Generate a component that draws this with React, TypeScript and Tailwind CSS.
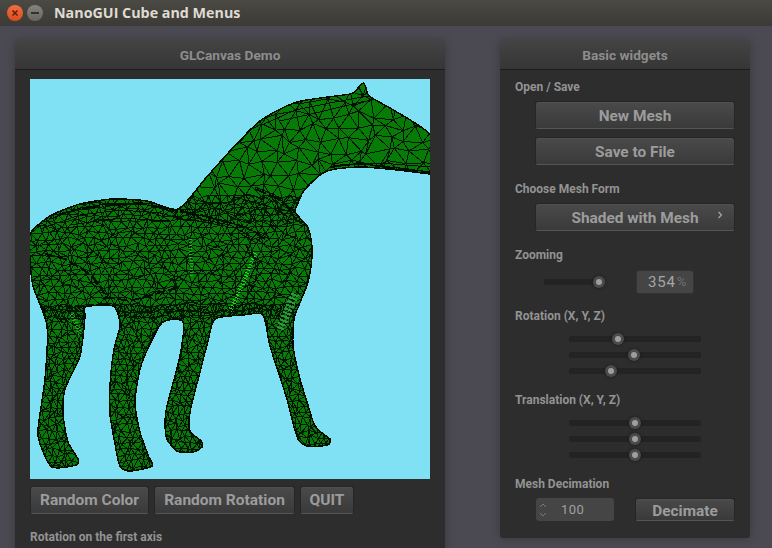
import React from 'react';

const OUTLINE: [number, number][] = [
  [333, 4], [336, 9], [339, 17], [360, 29], [385, 44], [400, 55], [412, 70], [412, 96], [400, 95], [367, 91], [333, 88], [305, 90], [293, 94], [282, 103], [273, 113], [268, 124], [265, 133], [277, 147], [281, 160], [282, 178], [278, 203], [269, 226], [264, 240], [263, 267], [270, 300], [277, 323], [284, 345], [292, 354], [300, 360], [299, 365], [292, 367], [277, 367], [268, 360], [262, 340], [257, 320], [240, 267], [233, 236], [213, 236], [185, 240], [178, 262], [170, 293], [160, 333], [160, 352], [171, 362], [172, 368], [163, 373], [147, 372], [137, 360], [135, 343], [137, 327], [150, 277], [153, 243], [133, 243], [120, 265], [110, 290], [105, 323], [110, 353], [118, 376], [122, 387], [100, 392], [90, 387], [85, 365], [80, 335], [80, 307], [84, 270], [90, 246], [83, 227], [55, 228], [55, 238], [50, 277], [35, 310], [33, 335], [38, 363], [48, 380], [46, 386], [22, 388], [10, 365], [8, 350], [15, 300], [17, 247], [3, 207], [0, 180], [0, 155], [20, 137], [50, 125], [83, 120], [117, 122], [148, 130], [175, 100], [200, 72], [230, 42], [267, 23], [320, 15], [328, 9],
];

// closed Catmull-Rom curve through the outline points
function smoothPath(p: [number, number][]) {
  let d = `M${p[0][0]} ${p[0][1]}`;
  for (let i = 0; i < p.length; i++) {
    const a = p[(i - 1 + p.length) % p.length];
    const b = p[i];
    const c = p[(i + 1) % p.length];
    const e = p[(i + 2) % p.length];
    const k = 0.12;
    d += `C${(b[0] + (c[0] - a[0]) * k).toFixed(1)} ${(b[1] + (c[1] - a[1]) * k).toFixed(1)} ${(c[0] - (e[0] - b[0]) * k).toFixed(1)} ${(c[1] - (e[1] - b[1]) * k).toFixed(1)} ${c[0]} ${c[1]}`;
  }
  return d + 'Z';
}

const outlinePath = smoothPath(OUTLINE);

// jittered triangle grid, seeded so the picture stays the same between runs
function buildMesh(x0: number, y0: number, x1: number, y1: number, cw: number, ch: number, seed: number) {
  let s = seed;
  const rnd = () => {
    s = (s * 16807) % 2147483647;
    return s / 2147483647;
  };
  const cols = Math.ceil((x1 - x0) / cw);
  const rows = Math.ceil((y1 - y0) / ch);
  const pts: [number, number][][] = [];
  for (let r = 0; r <= rows; r++) {
    const row: [number, number][] = [];
    for (let c = 0; c <= cols; c++) {
      row.push([
        x0 + c * cw + (rnd() - 0.5) * cw * 0.8 + (r % 2) * cw * 0.5,
        y0 + r * ch + (rnd() - 0.5) * ch * 0.8,
      ]);
    }
    pts.push(row);
  }
  let d = '';
  const seg = (a: [number, number], b: [number, number]) => {
    d += `M${a[0].toFixed(1)} ${a[1].toFixed(1)}L${b[0].toFixed(1)} ${b[1].toFixed(1)}`;
  };
  for (let r = 0; r <= rows; r++) {
    for (let c = 0; c <= cols; c++) {
      if (c < cols) seg(pts[r][c], pts[r][c + 1]);
      if (r < rows) {
        seg(pts[r][c], pts[r + 1][c]);
        if (c < cols) seg(r % 2 ? pts[r][c] : pts[r][c + 1], pts[r + 1][r % 2 ? c + 1 : c]);
      }
    }
  }
  return d;
}

const meshes = [
  buildMesh(145, 0, 410, 140, 14, 12, 1234),
  buildMesh(-5, 118, 290, 236, 8, 6, 98765),
  buildMesh(0, 226, 305, 396, 6, 6, 4242),
];

// long strokes that follow the body, where the reference's triangles bunch up
const streaks =
  'M20 140L50 129L83 124L117 126L148 134M10 150L50 136L90 131L130 134L160 142M40 146L90 139L140 142M150 133L175 137L215 148L240 160M160 138L200 146L235 165M205 118L240 128L262 140M225 108L245 116L265 133M232 46L265 31L300 24L338 17M250 42L290 33L335 22M300 88L330 85L370 89L400 93M310 86L350 84L400 88M285 100L300 92';

function Horse() {
  return (
    <svg viewBox="0 0 400 400" className="block h-[400px] w-[400px] bg-[#80e1f5]">
      <defs>
        <clipPath id="horse-clip">
          <path d={outlinePath} />
        </clipPath>
      </defs>
      <path d={outlinePath} fill="#067c06" />
      <g clipPath="url(#horse-clip)" shapeRendering="crispEdges" fill="none">
        {meshes.map((d, i) => (
          <path key={i} d={d} stroke="#021502" strokeWidth="1" />
        ))}
        <path d={streaks} stroke="#020c02" strokeWidth="1" />
        <path d="M225 174 L215 200 L200 232" stroke="#1fd81f" strokeWidth="4" strokeDasharray="1 2" />
        <path d="M160 160 L162 198" stroke="#16b816" strokeWidth="3" strokeDasharray="1 2" />
        <path d="M42 235 L50 255" stroke="#16c016" strokeWidth="4" strokeDasharray="1 2" />
        <path d="M265 215 L250 250" stroke="#2a9a3a" strokeWidth="8" strokeDasharray="2 2" />
        <path d="M150 132 L175 137 L215 148 L235 160" stroke="#020c02" strokeWidth="2" strokeDasharray="14 6" />
        <path d="M225 110 L245 118 L265 133" stroke="#020c02" strokeWidth="2" strokeDasharray="12 3" />
        <path d="M300 88 L330 84 L370 90 L400 94" stroke="#020c02" strokeWidth="2" strokeDasharray="20 3" />
        <path d="M15 175 L35 180 L60 195 L75 215" stroke="#020c02" strokeWidth="2" strokeDasharray="10 3" />
        <path d="M75 218 L100 222 L125 215 L150 208" stroke="#020c02" strokeWidth="2" strokeDasharray="10 3" />
        <path d="M30 135 L60 128 L110 124 L148 132" stroke="#020c02" strokeWidth="2" strokeDasharray="18 5" />
        <path d="M215 165 L228 185 L225 205 L210 228" stroke="#020c02" strokeWidth="1.5" strokeDasharray="8 3" />
      </g>
      <path d={outlinePath} fill="none" stroke="#020c02" strokeWidth="1.5" shapeRendering="crispEdges" />
    </svg>
  );
}

const Btn = ({ label, className, children }: { label: string; className: string; children?: React.ReactNode }) => (
  <div
    className={`relative flex items-center justify-center rounded-[3px] border border-[#262626] border-b-[#555555] bg-gradient-to-b from-[#4a4a4a] to-[#3a3a3a] text-[#9c9c9c] shadow-[inset_0_1px_0_#505050] ${className}`}
  >
    {label}
    {children}
  </div>
);

const Label = ({ text, className }: { text: string; className: string }) => (
  <div className={`h-4 text-[12px] leading-4 font-bold text-[#939393] ${className}`}>{text}</div>
);

const Slider = ({ w, at, className }: { w: number; at: number; className: string }) => (
  <div className={`relative h-[6px] rounded-[2px] bg-[#232323] ${className}`} style={{ width: w }}>
    <div
      className="absolute top-[-3px] flex h-3 w-3 items-center justify-center rounded-full bg-[#4b4b4b] shadow-[0_0_3px_#181818]"
      style={{ left: at - 6 }}
    >
      <div className="h-[6px] w-[6px] rounded-full bg-[#9e9e9e]" />
    </div>
  </div>
);

const Header = ({ title }: { title: string }) => (
  <div className="flex h-[29px] items-center justify-center border-b border-[#1c1c1c] bg-gradient-to-b from-[#434343] to-[#363636] text-[13.7px] font-bold text-[#8d8d8d]">
    {title}
  </div>
);

export default function App() {
  return (
    <div className="flex h-[548px] w-[772px] flex-col overflow-hidden bg-[#4b4a52] font-['Roboto',sans-serif]">
      {/* Title bar */}
      <div className="flex h-[26px] shrink-0 items-center bg-gradient-to-b from-[#4b4943] to-[#3b3a36] pl-[7px]">
        <div className="flex h-4 w-4 items-center justify-center rounded-full bg-gradient-to-b from-[#f0703f] to-[#dc4a1c] text-[#5a2010]">
          <svg viewBox="0 0 8 8" className="h-2 w-2" fill="none" stroke="currentColor" strokeWidth="1.5">
            <path d="M1.5 1.5L6.5 6.5M6.5 1.5L1.5 6.5" />
          </svg>
        </div>
        <div className="ml-1 flex h-4 w-4 items-center justify-center rounded-full bg-gradient-to-b from-[#85847f] to-[#66655f]">
          <div className="h-[1.5px] w-2 bg-[#33322e]" />
        </div>
        <div className="ml-[11px] font-['Open_Sans',sans-serif] text-[14.3px] font-bold text-[#dfdbd2]">NanoGUI Cube and Menus</div>
      </div>

      <div className="flex gap-[55px] pt-[15px] pl-[15px]">
        {/* GLCanvas window */}
        <div className="h-[530px] w-[430px] shrink-0 rounded-[3px] bg-[#2d2d2d] shadow-[0_0_10px_rgba(0,0,0,0.25)]">
          <Header title="GLCanvas Demo" />
          <div className="pt-[9px] pl-[15px]">
            <Horse />
            <div className="mt-[7px] flex gap-[5px] text-[15.5px] font-bold">
              <Btn label="Random Color" className="h-[28px] w-[119px] pt-[2px]" />
              <Btn label="Random Rotation" className="h-[28px] w-[141px] pt-[2px]" />
              <Btn label="QUIT" className="h-[28px] w-[54px] pt-[2px]" />
            </div>
            <Label text="Rotation on the first axis" className="mt-[15px]" />
          </div>
        </div>

        {/* Basic widgets window */}
        <div className="h-[497px] w-[250px] shrink-0 rounded-[3px] bg-[#2d2d2d] pb-3 shadow-[0_0_10px_rgba(0,0,0,0.25)]">
          <Header title="Basic widgets" />
          <div className="pl-[15px]">
            <Label text="Open / Save" className="mt-[9px]" />
            <div className="ml-5 flex w-[200px] flex-col gap-2 text-[15.4px] font-bold">
              <Btn label="New Mesh" className="mt-[6px] h-[28px] pt-[4px]" />
              <Btn label="Save to File" className="h-[28px] pt-[4px]" />
            </div>
            <Label text="Choose Mesh Form" className="mt-[16px]" />
            <Btn label="Shaded with Mesh" className="mt-[6px] ml-5 h-[28px] w-[200px] pt-[4px] text-[15.4px] font-bold">
              <svg viewBox="0 0 6 8" className="absolute top-[7px] right-[11px] h-2 w-[6px]" fill="none" stroke="#a8a8a8" strokeWidth="1.2">
                <path d="M1.5 1L4.5 4L1.5 7" />
              </svg>
            </Btn>
            <Label text="Zooming" className="mt-[16px]" />
            <div className="mt-[7px] flex items-center">
              <Slider w={60} at={55} className="ml-[29px]" />
              <div className="ml-[32px] flex h-6 w-[58px] items-center justify-end rounded-[3px] border border-[#333333] bg-[#454545] pr-[6px] text-[15px] tracking-[0.8px] text-[#a5a5a5]">
                354<span className="ml-[1px] text-[13px] text-[#6f6f6f]">%</span>
              </div>
            </div>
            <Label text="Rotation (X, Y, Z)" className="mt-[14px]" />
            <div className="mt-[12px] ml-[54px] flex flex-col gap-[10px]">
              <Slider w={132} at={49} className="" />
              <Slider w={132} at={65} className="" />
              <Slider w={132} at={42} className="" />
            </div>
            <Label text="Translation (X, Y, Z)" className="mt-[18px]" />
            <div className="mt-[12px] ml-[54px] flex flex-col gap-[10px]">
              <Slider w={132} at={66} className="" />
              <Slider w={132} at={66} className="" />
              <Slider w={132} at={66} className="" />
            </div>
            <Label text="Mesh Decimation" className="mt-[18px]" />
            <div className="mt-[6px] flex items-center">
              <div className="ml-[21px] flex h-[23px] w-[78px] items-center rounded-[3px] bg-[#454545] pl-[3px] text-[13px] tracking-[0.4px] text-[#a0a0a0]">
                <svg viewBox="0 0 8 16" className="h-4 w-2" fill="none" stroke="#7a7a7a" strokeWidth="1">
                  <path d="M1 5L4 2L7 5M1 11L4 14L7 11" />
                </svg>
                <span className="ml-[14px]">100</span>
              </div>
              <Btn label="Decimate" className="ml-[21px] h-[23px] w-[100px] pt-[4px] text-[15.4px] font-bold" />
            </div>
          </div>
        </div>
      </div>
    </div>
  );
}
